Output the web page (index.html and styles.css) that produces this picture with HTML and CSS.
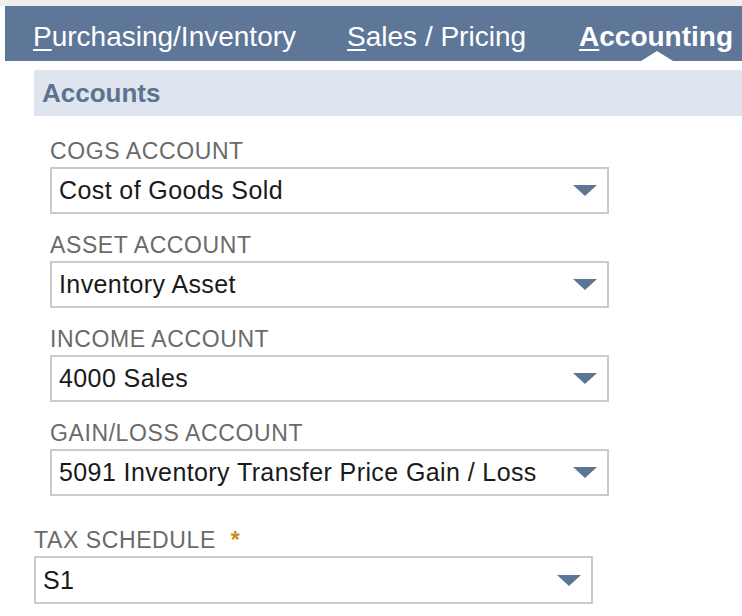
FILE: index.html
```html
<!DOCTYPE html>
<html lang="en">
<head>
    <meta charset="UTF-8">
    <meta name="viewport" content="width=device-width, initial-scale=1.0">
    <title>Item - Accounting</title>
    <link rel="stylesheet" href="styles.css">
</head>
<body>

    <div class="top-strip"></div>

    <div class="tabs">
        <span class="tab"><u>P</u>urchasing/Inventory</span>
        <span class="tab tab-sales"><u>S</u>ales / Pricing</span>
        <span class="tab tab-active"><u>A</u>ccounting</span>
    </div>

    <div class="section-header">Accounts</div>

    <div class="fields">
        <div class="form-group">
            <div class="field-label">COGS Account</div>
            <div class="select">
                <span>Cost of Goods Sold</span>
                <span class="arrow"></span>
            </div>
        </div>
        <div class="form-group">
            <div class="field-label">Asset Account</div>
            <div class="select">
                <span>Inventory Asset</span>
                <span class="arrow"></span>
            </div>
        </div>
        <div class="form-group">
            <div class="field-label">Income Account</div>
            <div class="select">
                <span>4000 Sales</span>
                <span class="arrow"></span>
            </div>
        </div>
        <div class="form-group">
            <div class="field-label">Gain/Loss Account</div>
            <div class="select">
                <span>5091 Inventory Transfer Price Gain / Loss</span>
                <span class="arrow"></span>
            </div>
        </div>
    </div>

    <div class="tax-group">
        <div class="field-label">Tax Schedule <span class="required">*</span></div>
        <div class="select">
            <span>S1</span>
            <span class="arrow"></span>
        </div>
    </div>

</body>
</html>
```

FILE: styles.css
```css
body {
    font-family: "Liberation Sans", Arial, sans-serif;
    margin: 0;
    padding: 0;
    background-color: #ffffff;
    overflow: hidden;
}

.top-strip {
    height: 6px;
    background-color: #eeeeee;
}

.tabs {
    display: flex;
    align-items: center;
    height: 55px;
    margin-left: 5px;
    padding-left: 28px;
    background-color: #5e7799;
    white-space: nowrap;
}

.tab {
    position: relative;
    color: #ffffff;
    font-size: 28px;
    line-height: 55px;
    padding-top: 3px;
    box-sizing: border-box;
    height: 55px;
}

.tab u {
    text-decoration-thickness: 2px;
    text-underline-offset: 3px;
}

.tab-sales {
    margin-left: 51px;
}

.tab-active {
    margin-left: 53px;
    font-weight: bold;
}

/* little caret under the active tab */
.tab-active::after {
    content: "";
    position: absolute;
    left: 62px;
    bottom: 0;
    border-left: 16px solid transparent;
    border-right: 16px solid transparent;
    border-bottom: 10px solid #ffffff;
}

.section-header {
    margin: 9px 0 0 34px;
    height: 46px;
    line-height: 46px;
    padding-left: 8px;
    background-color: #dfe5ee;
    color: #5d7290;
    font-size: 26px;
    font-weight: bold;
}

.fields {
    padding: 23px 0 0 50px;
}

.form-group {
    width: 559px;
    margin-bottom: 19px;
}

.field-label {
    font-size: 23px;
    letter-spacing: 0.6px;
    line-height: 24px;
    color: #6a6a6a;
    text-transform: uppercase;
    margin-bottom: 4px;
}

.select {
    display: flex;
    align-items: center;
    justify-content: space-between;
    height: 43px;
    padding: 0 10px 0 7px;
    border: 2px solid #cbcbcb;
    font-size: 25px;
    letter-spacing: 0.4px;
    color: #1a1a1a;
}

.arrow {
    width: 0;
    height: 0;
    border-left: 12px solid transparent;
    border-right: 12px solid transparent;
    border-top: 11px solid #5b7595;
}

.tax-group {
    width: 559px;
    margin: 32px 0 0 34px;
}

.tax-group .select {
    height: 44px;
}

.required {
    color: #d08a1e;
    font-weight: bold;
    margin-left: 8px;
}
```
